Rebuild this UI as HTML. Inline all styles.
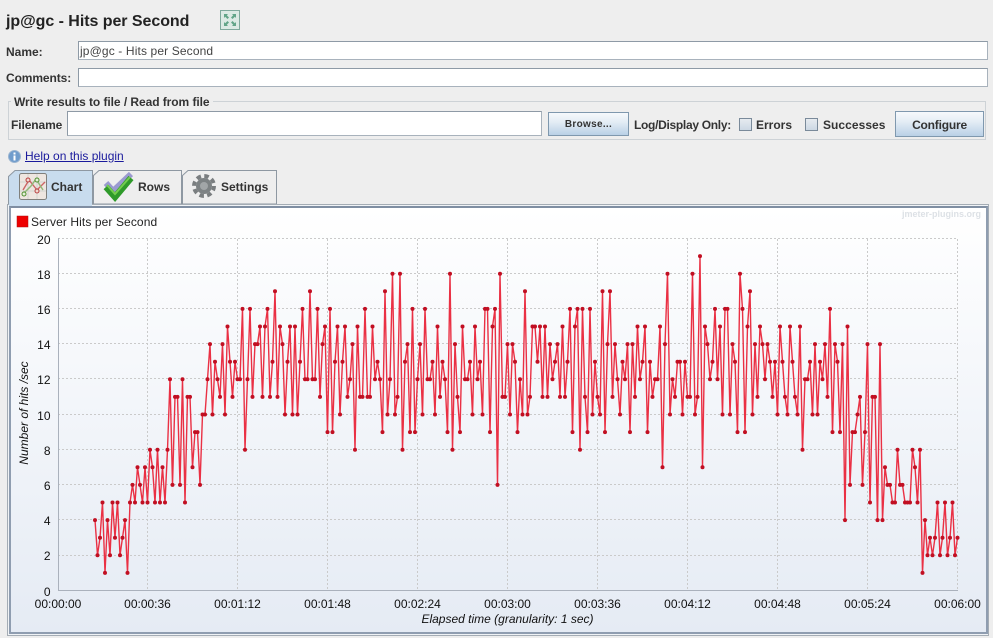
<!DOCTYPE html>
<html><head><meta charset="utf-8">
<style>
html,body{margin:0;padding:0;width:993px;height:638px;overflow:hidden;background:#eeeeee}
body{position:relative;font-family:"Liberation Sans",Arial,sans-serif;font-size:12px;color:#333}
.a{position:absolute;white-space:nowrap}
.b{font-weight:bold}
.f{position:absolute;background:#fff;border:1px solid #8e9aa6;border-right-color:#a8b2bc;border-bottom-color:#a8b2bc;box-sizing:border-box}
.btn{position:absolute;box-sizing:border-box;border:1px solid #7f98ae;background:linear-gradient(#f6f9fc,#e4edf5 40%,#b9d0e6);text-align:center;font-weight:bold;color:#333}
.cb{position:absolute;box-sizing:border-box;width:13px;height:13px;border:1px solid #7a8a9a;background:linear-gradient(#e6ebf0,#ccd8e4)}
svg{position:absolute;overflow:visible}
svg text{font-family:"Liberation Sans",Arial,sans-serif;font-size:12px;fill:#111}
</style></head>
<body>
<div class="a b" style="left:6px;top:12px;font-size:16px;line-height:20px;color:#222;letter-spacing:-.05px">jp@gc - Hits per Second</div>
<svg style="left:220px;top:10px" width="20" height="20" viewBox="0 0 20 20">
<rect x=".5" y=".5" width="19" height="19" fill="#dceae4" stroke="#7fa99c"/>
<path d="M4 4h4l-1.200 1.200L9 7.500 7.500 9 5.200 6.800 4 8zM16 4v4l-1.200-1.200L12.500 9 11 7.500l2.200-2.300L12 4zM4 16v-4l1.200 1.200L7.500 11 9 12.500l-2.200 2.300L8 16zM16 16h-4l1.200-1.200L11 12.500 12.500 11l2.300 2.200L16 12z" fill="#62a588"/>
</svg>

<div class="a b" style="left:6px;top:45px;line-height:14px">Name:</div>
<div class="f" style="left:78px;top:41px;width:910px;height:19px"></div>
<div class="a" style="left:80px;top:44px;line-height:14px;color:#444;letter-spacing:.13px">jp@gc - Hits per Second</div>
<div class="a b" style="left:6px;top:71px;line-height:14px;letter-spacing:-.1px">Comments:</div>
<div class="f" style="left:78px;top:68px;width:910px;height:19px"></div>

<div class="a" style="left:8px;top:101px;width:978px;height:39px;box-sizing:border-box;border:1px solid #cdd2d6"></div>
<div class="a b" style="left:11px;top:95px;padding:0 3px;line-height:14px;background:#eee;letter-spacing:-.06px">Write results to file / Read from file</div>
<div class="a b" style="left:11px;top:118px;line-height:14px;letter-spacing:-.1px">Filename</div>
<div class="f" style="left:67px;top:111px;width:475px;height:25px"></div>
<div class="btn" style="left:548px;top:112px;width:81px;height:24px;font-size:10px;line-height:24px;letter-spacing:.3px">Browse...</div>
<div class="a b" style="left:634px;top:118px;line-height:14px;letter-spacing:-.3px">Log/Display Only:</div>
<div class="cb" style="left:739px;top:118px"></div>
<div class="a b" style="left:756px;top:118px;line-height:14px">Errors</div>
<div class="cb" style="left:805px;top:118px"></div>
<div class="a b" style="left:823px;top:118px;line-height:14px;letter-spacing:.05px">Successes</div>
<div class="btn" style="left:895px;top:111px;width:89px;height:26px;line-height:26px;letter-spacing:-.2px">Configure</div>

<svg style="left:8px;top:150px" width="14" height="14" viewBox="0 0 14 14">
<circle cx="6.500" cy="6.500" r="6" fill="#6f9ccc" stroke="#9ab4d0"/>
<rect x="5.500" y="5.500" width="2" height="5" fill="#fff"/><rect x="5.500" y="2.500" width="2" height="2" fill="#fff"/>
</svg>
<div class="a" style="left:25px;top:149px;line-height:14px;color:#1a1a9c;text-decoration:underline">Help on this plugin</div>

<!-- tabs -->
<svg style="left:0;top:0" width="993" height="210" viewBox="0 0 993 210">
<path d="M93.500 204V175.500L99 170.500H181.500V204Z" fill="#eee" stroke="#8e98a2"/>
<path d="M182.500 204V175.500L188 170.500H276.500V204Z" fill="#eee" stroke="#8e98a2"/>
<path d="M8.500 206V176.500L15 170.500H92.500V206Z" fill="#c8dcee" stroke="#8e98a2"/>
</svg>
<svg style="left:19px;top:173px" width="28" height="27" viewBox="0 0 28 27">
<rect x=".5" y=".5" width="27" height="26" rx="2" fill="#eee6e0" stroke="#80807c"/>
<path d="M9 1v25M18 1v25M1 9h26M1 18h26" stroke="#d2d4cf" fill="none"/>
<path d="M4 17L10 7L18 17L26 9" stroke="#cc6666" stroke-width="1.400" fill="none"/>
<path d="M4 21L12 13L17 6L24 17" stroke="#8fb878" stroke-width="1.400" fill="none"/>
<circle cx="9" cy="7" r="2" fill="#f0d8d0" stroke="#b84040"/><circle cx="18" cy="18" r="2" fill="#f0d8d0" stroke="#b84040"/>
<circle cx="5" cy="21" r="2" fill="#e4f0d8" stroke="#4f8f30"/><circle cx="18" cy="7" r="2" fill="#e4f0d8" stroke="#4f8f30"/>
</svg>
<div class="a b" style="left:51px;top:180px;line-height:14px">Chart</div>
<svg style="left:102px;top:170px" width="33" height="33" viewBox="0 0 33 33">
<path d="M4 13L11 21L29 4" fill="none" stroke="#9a9ad0" stroke-width="6"/>
<path d="M4 17L13 27L29 8" fill="none" stroke="#2f9a2a" stroke-width="6.500"/>
<path d="M5 15L13 24L28 7" fill="none" stroke="#74cc50" stroke-width="2"/>
</svg>
<div class="a b" style="left:138px;top:180px;line-height:14px">Rows</div>
<svg style="left:192px;top:174px" width="24" height="24" viewBox="0 0 24 24">
<circle cx="12" cy="12" r="10" fill="none" stroke="#7a7e80" stroke-width="4" stroke-dasharray="4.500 3.350"/>
<circle cx="12" cy="12" r="8" fill="#7d8284"/>
<circle cx="12" cy="12" r="4" fill="#a2a6a8"/>
</svg>
<div class="a b" style="left:221px;top:180px;line-height:14px">Settings</div>

<!-- panel -->
<div class="a" style="left:7px;top:204px;width:982px;height:432px;box-sizing:border-box;border:1px solid #a4acb4;background:#f0f3f6"></div>
<svg style="left:0;top:0" width="993" height="210" viewBox="0 0 993 210">
<rect x="9" y="204" width="83" height="2" fill="#c8dcee"/>
</svg>
<div class="a" style="left:9px;top:206px;width:979px;height:428px;box-sizing:border-box;border:2px solid #8f9db0;border-top-color:#7f8ea2;background:linear-gradient(#ffffff,#e5ebf4)"></div>

<svg style="left:0;top:0" width="993" height="638" viewBox="0 0 993 638">
<defs>
<marker id="d" markerUnits="userSpaceOnUse" overflow="visible" markerWidth="3" markerHeight="3">
<ellipse cx="0" cy="0" rx=".8" ry=".1136" fill="#c10f22"/>
</marker>
</defs>
<rect x="17" y="216" width="11" height="11" fill="#ee0000" stroke="#b01010" stroke-width=".5"/>
<text x="31" y="226" style="fill:#222;letter-spacing:.1px">Server Hits per Second</text>
<text x="981" y="217" text-anchor="end" style="font-size:9px;font-weight:bold;fill:#dde1e6">jmeter-plugins.org</text>

<g fill="none" stroke="#cacaca" stroke-dasharray="2 2">
<path d="M58 238.500H958M58 273.500H958M58 308.500H958M58 343.500H958M58 378.500H958M58 414.500H958M58 449.500H958M58 484.500H958M58 519.500H958M58 555.500H958"/>
<path d="M147.500 239V590M237.500 239V590M327.500 239V590M417.500 239V590M507.500 239V590M597.500 239V590M687.500 239V590M777.500 239V590M867.500 239V590M957.500 239V590"/>
</g>
<path d="M58.500 238V590.500H958" fill="none" stroke="#aab1bc"/>

<g text-anchor="end">
<text x="50.500" y="244">20</text><text x="50.500" y="279">18</text><text x="50.500" y="314">16</text><text x="50.500" y="349">14</text><text x="50.500" y="384">12</text><text x="50.500" y="420">10</text><text x="50.500" y="455">8</text><text x="50.500" y="490">6</text><text x="50.500" y="525">4</text><text x="50.500" y="560">2</text><text x="50.500" y="596">0</text>
</g>
<g text-anchor="middle">
<text x="58" y="608">00:00:00</text><text x="147.500" y="608">00:00:36</text><text x="237.500" y="608">00:01:12</text><text x="327.500" y="608">00:01:48</text><text x="417.500" y="608">00:02:24</text><text x="507.500" y="608">00:03:00</text><text x="597.500" y="608">00:03:36</text><text x="687.500" y="608">00:04:12</text><text x="777.500" y="608">00:04:48</text><text x="867.500" y="608">00:05:24</text><text x="957.500" y="608">00:06:00</text>
<text x="507.500" y="623" font-style="italic">Elapsed time (granularity: 1 sec)</text>
<text transform="translate(28,413) rotate(-90)" font-style="italic">Number of hits /sec</text>
</g>

<g transform="translate(57.500,590.500) scale(2.500,-17.600)">
<polyline fill="none" stroke="#ea3044" stroke-width="1.400" vector-effect="non-scaling-stroke" stroke-linejoin="round" style="marker-start:url(#d);marker-mid:url(#d);marker-end:url(#d)" points="15,4 16,2 17,3 18,5 19,1 20,4 21,2 22,5 23,3 24,5 25,2 26,3 27,4 28,1 29,5 30,6 31,5 32,7 33,6 34,5 35,7 36,5 37,8 38,7 39,5 40,8 41,5 42,7 43,5 44,8 45,12 46,6 47,11 48,11 49,6 50,12 51,5 52,11 53,11 54,7 55,9 56,9 57,6 58,10 59,10 60,12 61,14 62,10 63,13 64,12 65,11 66,14 67,10 68,15 69,13 70,11 71,13 72,12 73,12 74,16 75,8 76,12 77,16 78,11 79,14 80,14 81,15 82,11 83,15 84,16 85,11 86,13 87,17 88,11 89,15 90,14 91,10 92,13 93,15 94,10 95,15 96,10 97,13 98,16 99,12 100,12 101,17 102,12 103,12 104,16 105,11 106,14 107,15 108,9 109,16 110,9 111,13 112,15 113,10 114,13 115,15 116,11 117,12 118,14 119,8 120,15 121,11 122,11 123,16 124,11 125,11 126,15 127,12 128,13 129,12 130,9 131,17 132,10 133,12 134,18 135,10 136,11 137,18 138,8 139,13 140,14 141,9 142,16 143,9 144,12 145,14 146,10 147,16 148,12 149,12 150,13 151,10 152,15 153,11 154,13 155,12 156,9 157,18 158,8 159,14 160,11 161,9 162,15 163,12 164,12 165,13 166,10 167,15 168,12 169,13 170,10 171,16 172,16 173,9 174,15 175,16 176,6 177,18 178,11 179,11 180,14 181,10 182,14 183,13 184,9 185,12 186,10 187,17 188,10 189,11 190,15 191,15 192,13 193,15 194,11 195,15 196,11 197,14 198,12 199,13 200,14 201,11 202,15 203,11 204,13 205,16 206,9 207,15 208,16 209,8 210,16 211,11 212,9 213,16 214,10 215,13 216,11 217,10 218,17 219,9 220,14 221,17 222,11 223,14 224,12 225,10 226,13 227,12 228,14 229,9 230,14 231,11 232,15 233,12 234,13 235,15 236,9 237,13 238,11 239,12 240,12 241,15 242,7 243,14 244,18 245,10 246,12 247,11 248,13 249,13 250,10 251,13 252,11 253,11 254,18 255,10 256,11 257,19 258,7 259,15 260,14 261,12 262,13 263,16 264,12 265,15 266,10 267,16 268,16 269,10 270,14 271,13 272,9 273,18 274,16 275,9 276,15 277,17 278,10 279,14 280,11 281,15 282,14 283,12 284,14 285,13 286,11 287,13 288,10 289,15 290,13 291,11 292,10 293,15 294,13 295,11 296,10 297,15 298,8 299,12 300,12 301,13 302,10 303,14 304,10 305,13 306,12 307,14 308,11 309,16 310,9 311,14 312,13 313,9 314,14 315,4 316,15 317,6 318,9 319,9 320,10 321,11 322,6 323,9 324,14 325,5 326,11 327,11 328,4 329,14 330,4 331,7 332,6 333,6 334,5 335,5 336,8 337,6 338,6 339,5 340,5 341,5 342,8 343,7 344,5 345,8 346,1 347,4 348,2 349,3 350,2 351,3 352,5 353,2 354,3 355,5 356,2 357,3 358,5 359,2 360,3"/>
</g>
</svg>
</body></html>
